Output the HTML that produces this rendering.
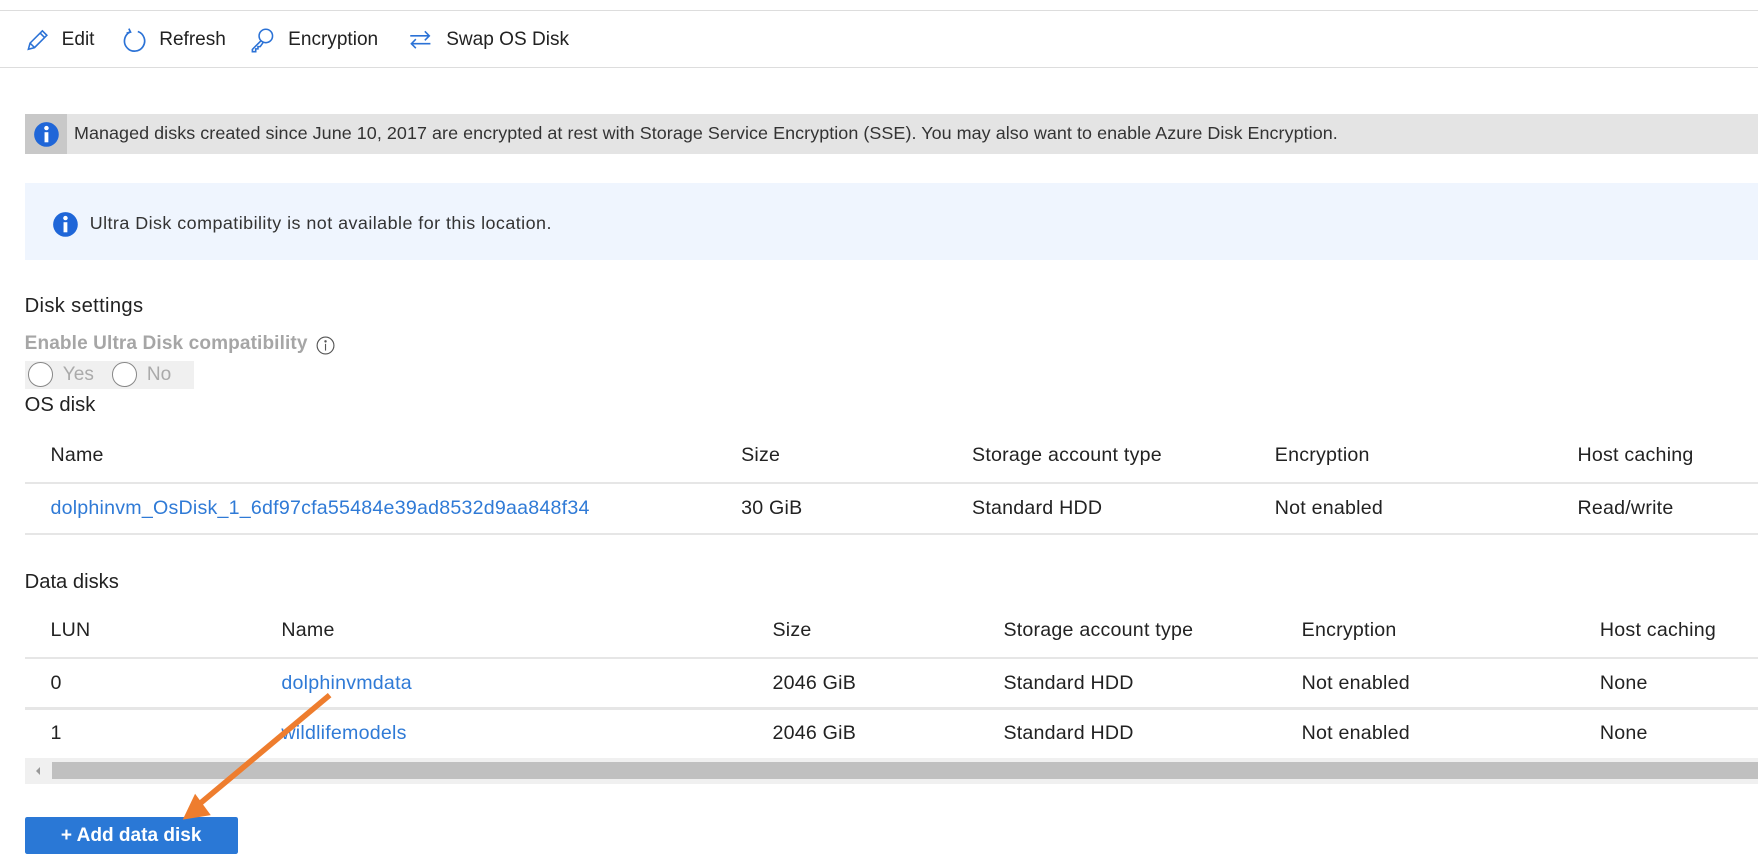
<!DOCTYPE html>
<html><head><meta charset="utf-8"><style>
html,body{margin:0;padding:0;background:#fff;overflow:hidden;width:1758px;height:865px}
#w{position:absolute;left:0;top:0;width:1568px;height:772px;zoom:1.12117;font-family:"Liberation Sans",sans-serif;color:#222;font-size:15px}
.a{position:absolute;white-space:nowrap}
.l{position:absolute;height:1px;background:#e6e6e6}
.lnk{color:#2f7ad6}
.t{font-size:17.5px;letter-spacing:0.2px}
</style></head><body><div id="w">
<div class="l" style="left:0;top:9px;width:1568px;background:#ddd"></div>
<div class="l" style="left:0;top:60px;width:1568px;background:#ddd"></div>
<svg class="a" style="left:22px;top:25px" width="22" height="22" viewBox="0 0 22 22" fill="none" stroke="#2b72d6" stroke-width="1.4"><path d="M3 19 L4.5 13.5 L15.5 2.5 L19.5 6.5 L8.5 17.5 Z M13.5 4.5 L17.5 8.5 M4.5 13.5 L8.5 17.5"/></svg>
<div class="a" style="left:55px;top:26px;font-size:17px">Edit</div>
<svg class="a" style="left:108px;top:24px" width="24" height="24" viewBox="0 0 24 24" fill="none" stroke="#2b72d6" stroke-width="1.5"><path d="M8 4.5 A9 9 0 1 0 15 4"/><path d="M7 1.5 L8.5 4.5 L5 5.5"/></svg>
<div class="a" style="left:142px;top:26px;font-size:17px">Refresh</div>
<svg class="a" style="left:222px;top:24px" width="24" height="24" viewBox="0 0 24 24" fill="none" stroke="#2b72d6" stroke-width="1.4"><circle cx="15" cy="8" r="6"/><path d="M11 12 L3 20 L3 22 L6 22 L6 19.5 L8 19.5 L8 17.5 L10 17.5 L12.5 14"/></svg>
<div class="a" style="left:257px;top:26px;font-size:17px">Encryption</div>
<svg class="a" style="left:364px;top:25px" width="22" height="22" viewBox="0 0 22 22" fill="none" stroke="#2b72d6" stroke-width="1.4"><path d="M2 7 H19 M15 3 L19 7 L15 11 M20 14 H3 M7 10 L3 14 L7 18"/></svg>
<div class="a" style="left:398px;top:26px;font-size:17px">Swap OS Disk</div>

<div class="a" style="left:22px;top:102px;width:1546px;height:35px;background:#e4e4e4"></div>
<div class="a" style="left:22px;top:102px;width:38px;height:35px;background:#c8c8c8"></div>
<svg class="a" style="left:29px;top:108px" width="24" height="24" viewBox="0 0 24 24"><circle cx="12" cy="12" r="11" fill="#1f66d8"/><rect x="10.3" y="10" width="3.4" height="9" fill="#fff"/><circle cx="12" cy="6.3" r="2" fill="#fff"/></svg>
<div class="a" style="left:66px;top:110px;font-size:16px;letter-spacing:0.05px;color:#333">Managed disks created since June 10, 2017 are encrypted at rest with Storage Service Encryption (SSE). You may also want to enable Azure Disk Encryption.</div>

<div class="a" style="left:22px;top:163px;width:1546px;height:69px;background:#eff5fe"></div>
<svg class="a" style="left:46px;top:188px" width="24" height="24" viewBox="0 0 24 24"><circle cx="12" cy="12" r="11" fill="#1f66d8"/><rect x="10.3" y="10" width="3.4" height="9" fill="#fff"/><circle cx="12" cy="6.3" r="2" fill="#fff"/></svg>
<div class="a" style="left:80px;top:190px;font-size:16px;letter-spacing:0.4px;color:#333">Ultra Disk compatibility is not available for this location.</div>

<div class="a" style="left:22px;top:263px;font-size:18px;letter-spacing:0.3px">Disk settings</div>
<div class="a" style="left:22px;top:297px;font-size:17px;color:#a6a6a6;font-weight:bold;letter-spacing:0.1px">Enable Ultra Disk compatibility</div>
<svg class="a" style="left:282px;top:300px" width="17" height="17" viewBox="0 0 17 17" fill="none" stroke="#555" stroke-width="1"><circle cx="8.5" cy="8.5" r="7.5"/><path d="M8.5 7 V13"/><circle cx="8.5" cy="4.8" r="0.6" fill="#555"/></svg>
<div class="a" style="left:22px;top:322px;width:151px;height:25px;background:#f0f0f0"></div>
<div class="a" style="left:25px;top:323px;width:22px;height:22px;border:1.5px solid #888;border-radius:50%;box-sizing:border-box;background:#fff"></div>
<div class="a" style="left:56px;top:325px;font-size:17px;color:#aaa">Yes</div>
<div class="a" style="left:100px;top:323px;width:22px;height:22px;border:1.5px solid #888;border-radius:50%;box-sizing:border-box;background:#fff"></div>
<div class="a" style="left:131px;top:325px;font-size:17px;color:#aaa">No</div>
<div class="a" style="left:22px;top:351px;font-size:18px">OS disk</div>

<div class="a t" style="left:45px;top:396px">Name</div>
<div class="a t" style="left:661px;top:396px">Size</div>
<div class="a t" style="left:867px;top:396px">Storage account type</div>
<div class="a t" style="left:1137px;top:396px">Encryption</div>
<div class="a t" style="left:1407px;top:396px">Host caching</div>
<div class="l" style="left:22px;top:430px;width:1546px;height:2px"></div>
<div class="a lnk t" style="left:45px;top:443px">dolphinvm_OsDisk_1_6df97cfa55484e39ad8532d9aa848f34</div>
<div class="a t" style="left:661px;top:443px">30 GiB</div>
<div class="a t" style="left:867px;top:443px">Standard HDD</div>
<div class="a t" style="left:1137px;top:443px">Not enabled</div>
<div class="a t" style="left:1407px;top:443px">Read/write</div>
<div class="l" style="left:22px;top:475px;width:1546px;height:2px"></div>

<div class="a" style="left:22px;top:509px;font-size:18px">Data disks</div>
<div class="a t" style="left:45px;top:552px">LUN</div>
<div class="a t" style="left:251px;top:552px">Name</div>
<div class="a t" style="left:689px;top:552px">Size</div>
<div class="a t" style="left:895px;top:552px">Storage account type</div>
<div class="a t" style="left:1161px;top:552px">Encryption</div>
<div class="a t" style="left:1427px;top:552px">Host caching</div>
<div class="l" style="left:22px;top:586px;width:1546px;height:2px"></div>
<div class="a t" style="left:45px;top:599px">0</div>
<div class="a lnk t" style="left:251px;top:599px">dolphinvmdata</div>
<div class="a t" style="left:689px;top:599px">2046 GiB</div>
<div class="a t" style="left:895px;top:599px">Standard HDD</div>
<div class="a t" style="left:1161px;top:599px">Not enabled</div>
<div class="a t" style="left:1427px;top:599px">None</div>
<div class="l" style="left:22px;top:631px;width:1546px;height:2px"></div>
<div class="a t" style="left:45px;top:644px">1</div>
<div class="a lnk t" style="left:251px;top:644px">wildlifemodels</div>
<div class="a t" style="left:689px;top:644px">2046 GiB</div>
<div class="a t" style="left:895px;top:644px">Standard HDD</div>
<div class="a t" style="left:1161px;top:644px">Not enabled</div>
<div class="a t" style="left:1427px;top:644px">None</div>
<div class="a" style="left:22px;top:676px;width:1546px;height:23px;background:#f0f0f0"></div>
<div class="a" style="left:46px;top:680px;width:1522px;height:15px;background:#c0c0c0"></div>
<div class="a" style="left:32px;top:684px;width:0;height:0;border-top:4px solid transparent;border-bottom:4px solid transparent;border-right:4px solid #999"></div>

<div class="a" style="left:22px;top:729px;width:190px;height:33px;background:#2a78d6;border-radius:2px;color:#fff;font-weight:bold;font-size:17px;text-align:center;line-height:33px">+ Add data disk</div>
<svg class="a" style="left:0;top:0" width="1568" height="772"><line x1="294" y1="620" x2="178" y2="717" stroke="#ee7d2e" stroke-width="5"/><polygon points="163,731 188,727 174,708" fill="#ee7d2e"/></svg>
</div></body></html>
